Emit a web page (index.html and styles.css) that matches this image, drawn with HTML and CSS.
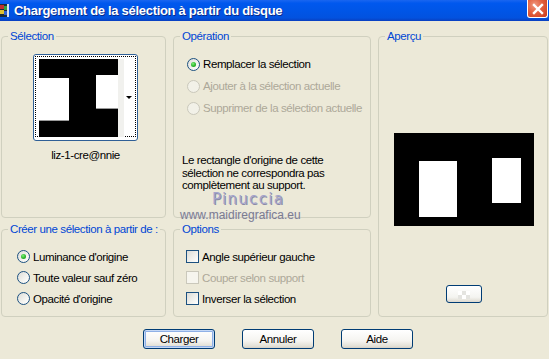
FILE: index.html
```html
<!DOCTYPE html>
<html lang="fr">
<head>
<meta charset="utf-8">
<title>Chargement de la sélection à partir du disque</title>
<link rel="stylesheet" href="styles.css">
</head>
<body>
<div class="window">
  <div class="titlebar">
    <span class="appicon">
      <svg width="9" height="13" viewBox="0 0 9 13">
        <rect x="0" y="0" width="9" height="13" fill="#1b2a3a"/>
        <rect x="0" y="1" width="4" height="4" fill="#c03030"/>
        <rect x="4" y="2" width="4" height="4" fill="#30a040"/>
        <rect x="0" y="6" width="4" height="4" fill="#e0c030"/>
        <rect x="4" y="7" width="4" height="4" fill="#3060d0"/>
        <rect x="7" y="0" width="2" height="13" fill="#d8e0f0"/>
      </svg>
    </span>
    <span class="title">Chargement de la sélection à partir du disque</span>
    <span class="close">
      <svg width="12" height="12" viewBox="0 0 12 12">
        <path d="M2 2 L10 10 M10 2 L2 10" stroke="#fff" stroke-width="2.4" stroke-linecap="square"/>
      </svg>
    </span>
  </div>

  <div class="content">
    <div class="groups">
      <fieldset class="group g-sel">
        <legend>Sélection</legend>
        <div class="thumb">
          <div class="thumb-focus">
            <svg class="thumb-img" width="79" height="78" viewBox="0 0 79 78">
              <rect width="79" height="78" fill="#000"/>
              <rect x="0" y="19" width="30" height="43" fill="#fff"/>
              <rect x="0" y="61" width="30" height="1" fill="#9a9a9a"/>
              <rect x="57" y="16" width="22" height="34" fill="#fff"/>
              <rect x="57" y="49" width="22" height="1" fill="#9a9a9a"/>
            </svg>
            <span class="thumb-strip"></span>
            <span class="thumb-arrow"></span>
          </div>
        </div>
        <div class="thumb-name">liz-1-cre@nnie</div>
      </fieldset>

      <fieldset class="group g-op">
        <legend>Opération</legend>
        <div class="op-list">
          <div class="opt"><span class="radio checked"></span><span>Remplacer la sélection</span></div>
          <div class="opt disabled"><span class="radio"></span><span>Ajouter à la sélection actuelle</span></div>
          <div class="opt disabled"><span class="radio"></span><span>Supprimer de la sélection actuelle</span></div>
        </div>
        <p class="note">Le rectangle d'origine de cette<br>sélection ne correspondra pas<br>complètement au support.</p>
      </fieldset>

      <fieldset class="group g-prev">
        <legend>Aperçu</legend>
        <svg class="preview" width="140" height="93" viewBox="0 0 140 93">
          <rect width="140" height="93" fill="#000"/>
          <rect x="25" y="28" width="38" height="56" fill="#fff"/>
          <rect x="98" y="25" width="29" height="45" fill="#fff"/>
        </svg>
        <div class="small-btn"><span class="checker"></span></div>
      </fieldset>

      <fieldset class="group g-create">
        <legend>Créer une sélection à partir de :</legend>
        <div class="opt-list">
          <div class="opt"><span class="radio checked"></span><span>Luminance d'origine</span></div>
          <div class="opt"><span class="radio"></span><span>Toute valeur sauf zéro</span></div>
          <div class="opt"><span class="radio"></span><span>Opacité d'origine</span></div>
        </div>
      </fieldset>

      <fieldset class="group g-options">
        <legend>Options</legend>
        <div class="opt-list">
          <div class="opt"><span class="check"></span><span>Angle supérieur gauche</span></div>
          <div class="opt disabled"><span class="check"></span><span>Couper selon support</span></div>
          <div class="opt"><span class="check"></span><span>Inverser la sélection</span></div>
        </div>
      </fieldset>
    </div>

    <div class="buttons">
      <div class="btn default">Charger</div>
      <div class="btn">Annuler</div>
      <div class="btn">Aide</div>
    </div>
  </div>

  <div class="watermark">
    <div class="wm-name">Pinuccia</div>
    <div class="wm-url">www.maidiregrafica.eu</div>
  </div>
</div>
</body>
</html>
```

FILE: styles.css
```css
html, body {
  margin: 0;
  padding: 0;
}
body {
  width: 549px;
  height: 359px;
  overflow: hidden;
  background: #ECE9D8;
  font-family: "Liberation Sans", Arial, sans-serif;
  font-size: 11.5px;
  letter-spacing: -0.4px;
  color: #000;
}
.window {
  position: relative;
  width: 549px;
  height: 359px;
}

/* title bar */
.titlebar {
  height: 21px;
  display: flex;
  align-items: center;
  background: linear-gradient(#1a66f0 0%, #0058ee 15%, #0055e6 55%, #0252df 85%, #0a3fbf 100%);
  color: #fff;
}
.appicon {
  display: flex;
  width: 9px;
  height: 13px;
  margin-top: -1px;
}
.title {
  margin-left: 5px;
  font-size: 13px;
  font-weight: bold;
  letter-spacing: -0.3px;
  line-height: 21px;
  padding-bottom: 1px;
  text-shadow: 1px 1px 0 #0a2a8a;
  flex: 1;
}
.close {
  align-self: flex-start;
  width: 19px;
  height: 17px;
  margin-right: 1px;
  border: 1px solid #fff;
  border-top: none;
  border-radius: 0 0 3px 3px;
  background: radial-gradient(circle at 35% 30%, #f09a80 0%, #e2603f 45%, #c8391c 100%);
  display: flex;
  align-items: center;
  justify-content: center;
}

/* content */
.content {
  padding: 9px 0 0 1px;
}
.groups {
  display: grid;
  grid-template-columns: 165px 198px 170px;
  grid-template-rows: 188px 94px;
  column-gap: 7px;
  row-gap: 5px;
}
.group {
  margin: 0;
  padding: 0;
  min-width: 0;
  border: 1px solid #D0D0BF;
  border-radius: 4px;
  display: flex;
  flex-direction: column;
}
.group legend {
  margin-left: 6px;
  padding: 0 2px;
  color: #0046D5;
  line-height: 13px;
}
.g-sel { grid-column: 1; grid-row: 1; align-items: center; }
.g-op { grid-column: 2; grid-row: 1; }
.g-prev { grid-column: 3; grid-row: 1 / span 2; align-items: center; }
.g-create { grid-column: 1; grid-row: 2; }
.g-options { grid-column: 2; grid-row: 2; }

/* thumbnail */
.thumb {
  margin-top: 11px;
  width: 101px;
  height: 83px;
  border: 1px solid #2f5f96;
  border-radius: 3px;
  background: #fff;
  padding: 1px;
  box-sizing: content-box;
  margin-left: 3px;
}
.thumb-focus {
  height: 81px;
  border: 1px dotted #000;
  box-sizing: border-box;
  display: flex;
  align-items: flex-start;
  padding: 2px 0 0 3px;
}
.thumb-img {
  display: block;
  flex: none;
}
.thumb-strip {
  width: 6px;
  height: 78px;
  background: #f1f1ee;
}
.thumb-arrow {
  margin: 37px 0 0 2px;
  width: 0;
  height: 0;
  border-left: 3px solid transparent;
  border-right: 3px solid transparent;
  border-top: 3px solid #000;
}
.thumb-name {
  margin-top: 8px;
  margin-left: 4px;
  line-height: 13px;
}

/* options */
.op-list {
  padding: 10px 0 0 13px;
}
.op-list .opt {
  height: 22px;
}
.opt-list {
  padding: 10px 0 0 15px;
}
.g-options .opt-list {
  padding-left: 12px;
}
.opt-list .opt {
  height: 21px;
}
.opt {
  display: flex;
  align-items: center;
  gap: 3px;
  white-space: nowrap;
}
.opt.disabled {
  color: #ACA899;
}
.radio {
  flex: none;
  width: 11px;
  height: 11px;
  border: 1px solid #1C5180;
  border-radius: 50%;
  background: linear-gradient(135deg, #DCDCD7 0%, #F4F4F0 60%, #FFFFFF 100%);
  display: flex;
  align-items: center;
  justify-content: center;
}
.radio.checked::after {
  content: "";
  width: 5px;
  height: 5px;
  border-radius: 50%;
  background: radial-gradient(circle at 40% 35%, #7ef07a 0%, #2ab52a 55%, #1c8c1c 100%);
}
.disabled .radio {
  border-color: #CAC8BB;
  background: #F2F1E8;
}
.check {
  flex: none;
  width: 11px;
  height: 11px;
  border: 1px solid #1C5180;
  background: linear-gradient(135deg, #DCDCD7 0%, #F2F2EE 60%, #FFFFFF 100%);
}
.disabled .check {
  border-color: #CAC8BB;
  background: #F6F5EE;
}
.note {
  margin: 35px 0 0 8px;
  line-height: 12.5px;
}

/* preview */
.preview {
  display: block;
  margin-top: 90px;
  margin-left: 1px;
}
.small-btn {
  margin-top: 59px;
  margin-left: 2px;
  width: 34px;
  height: 16px;
  border: 1px solid #003C74;
  border-radius: 3px;
  background: linear-gradient(#ffffff 0%, #f4f4f0 70%, #dcd8ce 100%);
  display: flex;
  align-items: center;
  justify-content: center;
}
.checker {
  width: 12px;
  height: 8px;
  margin-top: 2px;
  background: repeating-conic-gradient(#e4e4e0 0% 25%, #ffffff 0% 50%) 0 0 / 8px 8px;
}

/* buttons */
.buttons {
  display: flex;
  gap: 27px;
  margin-top: 12px;
  padding-left: 142px;
}
.btn {
  width: 70px;
  height: 18px;
  border: 1px solid #003C74;
  border-radius: 3px;
  background: linear-gradient(#ffffff 0%, #f5f4f0 60%, #e3e0d6 90%, #d6d0c5 100%);
  display: flex;
  align-items: center;
  justify-content: center;
  line-height: 13px;
}
.btn.default {
  box-shadow: inset 0 0 0 1px #c4d8f6, inset 0 0 0 2px #8fb0e6;
}

/* watermark */
.watermark {
  position: absolute;
  left: 180px;
  top: 192px;
  letter-spacing: 0;
}
.wm-name {
  margin-left: 32px;
  font-family: "DejaVu Sans", sans-serif;
  font-size: 15px;
  letter-spacing: 1.3px;
  line-height: 14px;
  color: #A4A4CC;
  text-shadow: 1px 1px 0 #8a8aa6;
}
.wm-url {
  font-family: "Liberation Sans", sans-serif;
  font-size: 12px;
  line-height: 12px;
  margin-top: 3px;
  color: #7c7c8e;
  text-shadow: 0 0 1px #d8d8e8;
}
```
